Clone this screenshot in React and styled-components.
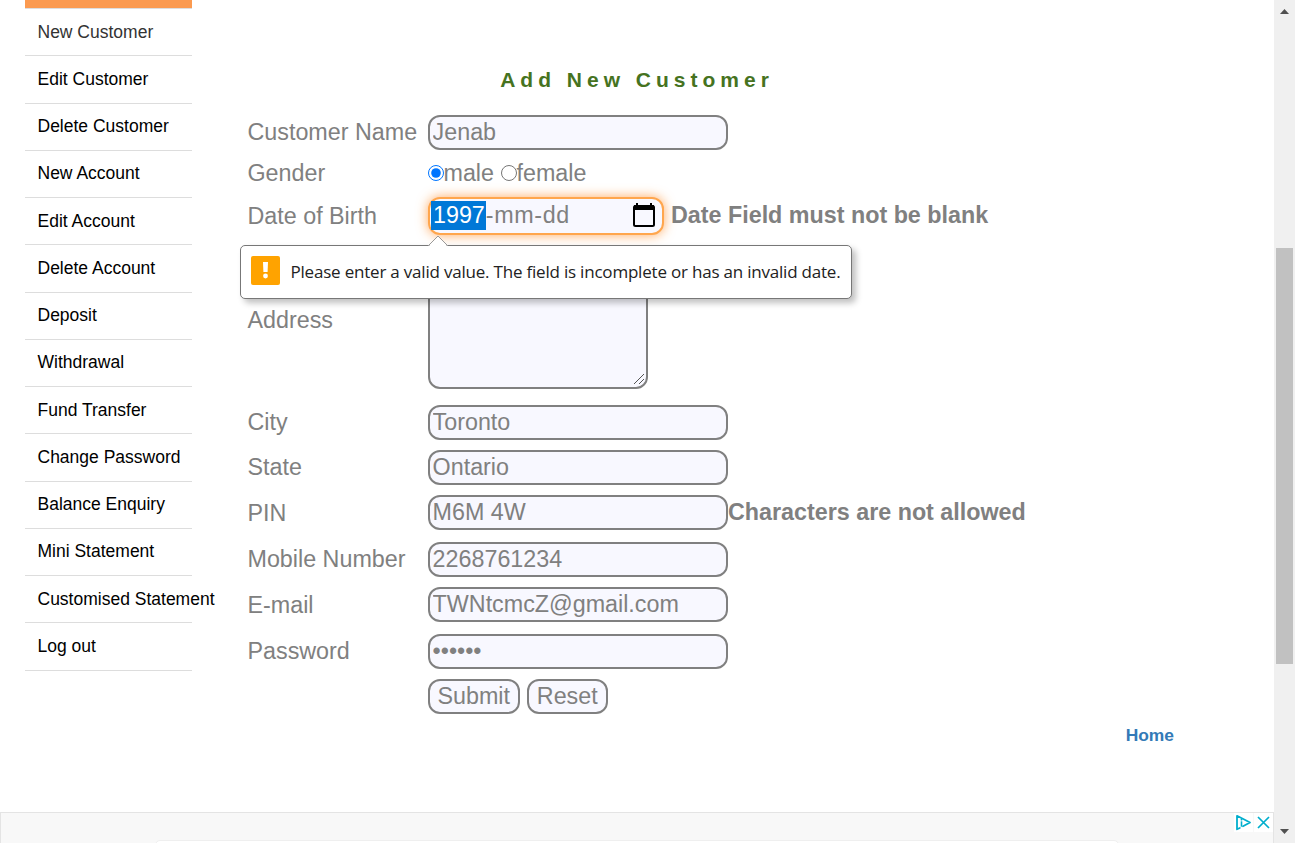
import React from "react";
import styled, { createGlobalStyle, css } from "styled-components";

const GlobalStyle = createGlobalStyle`
  * { box-sizing: border-box; }
  body {
    margin: 0;
    overflow: hidden;
    background: #fff;
    font-family: "Liberation Sans", Arial, sans-serif;
  }
`;

const Window = styled.div`
  display: flex;
  width: 1295px;
  height: 843px;
  overflow: hidden;
`;

const Page = styled.main`
  width: 1274px;
  display: flex;
  flex-direction: column;
`;

const Columns = styled.div`
  display: flex;
  height: 812px;
  padding-left: 25px;
`;

const Menu = styled.ul`
  width: 167px;
  margin: 0;
  padding: 0;
  list-style: none;
  border-top: 8px solid #fb9a50;
`;

const MenuItem = styled.li`
  height: 47.26px;
  padding: 0.55px 0 0 12.5px;
  border-top: 1px solid #ddd;
  line-height: 45.4px;
  font-size: 17.5px;
  white-space: nowrap;
  color: ${(p) => (p.$active ? "#333" : "#000")};
  &:last-child {
    height: 48.4px;
    border-bottom: 1px solid #ddd;
  }
`;

const Content = styled.section`
  flex: 1;
  padding: 64px 100px 0 55.5px;
  display: flex;
  flex-direction: column;
`;

const Title = styled.h1`
  width: 777px;
  height: 46px;
  margin: 0;
  padding-left: 2px;
  text-align: center;
  font-size: 21px;
  line-height: 32px;
  letter-spacing: 5px;
  color: #46731f;
`;

const Row = styled.div`
  display: grid;
  grid-template-columns: 180.5px 1fr;
  align-items: center;
  height: ${(p) => p.$height}px;
  font-size: 23.3px;
  line-height: 27px;
  color: #808080;
`;

const Label = styled.label`
  white-space: nowrap;
  padding-top: ${(p) => (p.$low ? 2 : 0)}px;
`;

const Cell = styled.div`
  display: flex;
  align-items: center;
  position: relative;
`;

const fieldLook = css`
  border: 2px solid #808080;
  border-radius: 12px;
  background: #f8f8ff;
  color: #808080;
  font-family: inherit;
  font-size: 23.3px;
  outline: none;
`;

const TextInput = styled.input`
  ${fieldLook}
  width: 300px;
  height: 35px;
  padding: 0 2px 1px 2.6px;
  ${(p) => p.type === "password" && "padding-bottom: 0;"}
`;

const AddressBox = styled.textarea`
  ${fieldLook}
  width: 220px;
  height: 138px;
  padding: 2px;
  resize: none;
`;

const Grip = styled.svg`
  width: 12px;
  height: 12px;
  margin: 118px 0 0 -15px;
  z-index: 1;
`;

const Radio = styled.input`
  width: 16px;
  height: 16px;
  margin: 0 0 2px;
`;

const RadioText = styled.span`
  margin: 0 7px 0 -0.5px;
`;

const DateInput = styled.div`
  ${fieldLook}
  display: flex;
  align-items: center;
  width: 236px;
  height: 38px;
  padding: 0 6px 2px 1px;
  border-color: #ffa64d;
  box-shadow: 0 0 12px rgba(255, 140, 40, 0.75);
`;

const SelectedYear = styled.span`
  padding: 1px 1px 1px 2px;
  background: #0078d7;
  color: #fff;
`;

const DateRest = styled.span`
  letter-spacing: 0.65px;
`;

const CalendarIcon = styled.svg`
  width: 24px;
  height: 26px;
  margin: 0 0 1px auto;
`;

const Message = styled.strong`
  margin-left: ${(p) => p.$gap || 0}px;
  margin-bottom: ${(p) => (p.$gap ? 2 : 0)}px;
  white-space: nowrap;
`;

const Bubble = styled.div`
  position: absolute;
  z-index: 2;
  top: 48px;
  left: -188px;
  display: flex;
  align-items: center;
  width: 612px;
  height: 54px;
  padding: 0 0 0 10px;
  border: 1px solid #777;
  border-radius: 5px;
  background: #fff;
  box-shadow: 4px 4px 6px rgba(0, 0, 0, 0.25);
  color: #222;
`;

const BubbleArrow = styled.svg`
  position: absolute;
  top: -11px;
  left: 186px;
  width: 22px;
  height: 12px;
`;

const WarnIcon = styled.svg`
  width: 29px;
  height: 29px;
  margin: 0 10.5px 4px 0;
`;

const BubbleText = styled.span`
  font: 400 17px/24px "Open Sans", "Noto Sans", sans-serif;
  letter-spacing: -0.205px;
  white-space: nowrap;
`;

const Button = styled.button`
  ${fieldLook}
  width: ${(p) => p.$width}px;
  height: 35px;
  margin-right: 7px;
  padding: 0 0.5px 1px 0;
`;

const HomeLink = styled.a`
  align-self: flex-end;
  margin-top: 9px;
  font-size: 17.4px;
  line-height: 22px;
  font-weight: bold;
  color: #337ab7;
`;

const AdBar = styled.aside`
  display: flex;
  justify-content: space-between;
  height: 31px;
  padding-left: 154px;
  border: 1px solid #e4e4e4;
  border-bottom: 0;
  background: #f8f8f8;
`;

const AdCard = styled.div`
  width: 964px;
  height: 20px;
  margin-top: 27px;
  border: 1px solid #efefef;
  border-radius: 5px;
  background: #fff;
`;

const AdControls = styled.div`
  display: flex;
  gap: 1px;
  height: 19px;
`;

const AdButton = styled.svg`
  width: 19px;
  height: 19px;
  background: #fff;
`;

const ScrollTrack = styled.div`
  display: flex;
  flex-direction: column;
  align-items: center;
  width: 21px;
  background: #f0f0f0;
`;

const ScrollArrow = styled.svg`
  width: 9px;
  height: 5px;
  margin-top: ${(p) => p.$top}px;
`;

const ScrollThumb = styled.div`
  width: 17px;
  height: 416px;
  margin-top: 234px;
  background: #c1c1c1;
`;

const menuItems = [
  "New Customer", "Edit Customer", "Delete Customer", "New Account",
  "Edit Account", "Delete Account", "Deposit", "Withdrawal", "Fund Transfer",
  "Change Password", "Balance Enquiry", "Mini Statement",
  "Customised Statement", "Log out",
];

function Field({ label, height, low, children }) {
  return (
    <Row $height={height}>
      <Label $low={low}>{label}</Label>
      <Cell>{children}</Cell>
    </Row>
  );
}

function DateField() {
  return (
    <>
      <DateInput>
        <SelectedYear>1997</SelectedYear>
        <DateRest>-mm-dd</DateRest>
        <CalendarIcon viewBox="0 0 24 26">
          <path d="M5 1v4M19 1v4" stroke="#000" strokeWidth="2" />
          <rect x="2" y="4" width="20" height="20" rx="1.5" fill="none" stroke="#000" strokeWidth="2" />
          <path d="M2 3h20v5H2z" fill="#000" />
        </CalendarIcon>
      </DateInput>
      <Message $gap={7}>Date Field must not be blank</Message>
      <Bubble>
        <BubbleArrow viewBox="0 0 22 12">
          <path d="M1 12L11 1.5 21 12z" fill="#fff" />
          <path d="M1 11L11 1 21 11" fill="none" stroke="#999" />
        </BubbleArrow>
        <WarnIcon viewBox="0 0 29 29">
          <rect width="29" height="29" rx="2" fill="#ffa300" />
          <path d="M12 6h5l-.4 10h-4.200z" fill="#fff" />
          <circle cx="14.5" cy="20" r="2.4" fill="#fff" />
        </WarnIcon>
        <BubbleText>
          Please enter a valid value. The field is incomplete or has an invalid date.
        </BubbleText>
      </Bubble>
    </>
  );
}

export default function App() {
  return (
    <Window>
      <GlobalStyle />
      <Page>
        <Columns>
          <Menu>
            {menuItems.map((item, i) => (
              <MenuItem key={item} $active={i === 0}>{item}</MenuItem>
            ))}
          </Menu>
          <Content>
            <Title>Add New Customer</Title>
            <Field label="Customer Name" height={45}>
              <TextInput defaultValue="Jenab" />
            </Field>
            <Field label="Gender" height={37}>
              <Radio type="radio" name="gender" defaultChecked />
              <RadioText>male</RadioText>
              <Radio type="radio" name="gender" />
              <RadioText>female</RadioText>
            </Field>
            <Field label="Date of Birth" height={48}>
              <DateField />
            </Field>
            <Field label="Address" height={160}>
              <AddressBox />
              <Grip viewBox="0 0 12 12">
                <path d="M1 11L11 1M6 11L11 6" stroke="#555" />
              </Grip>
            </Field>
            <Field label="City" height={45}>
              <TextInput defaultValue="Toronto" />
            </Field>
            <Field label="State" height={45}>
              <TextInput defaultValue="Ontario" />
            </Field>
            <Field label="PIN" height={45} low>
              <TextInput defaultValue="M6M 4W" />
              <Message>Characters are not allowed</Message>
            </Field>
            <Field label="Mobile Number" height={49}>
              <TextInput defaultValue="2268761234" />
            </Field>
            <Field label="E-mail" height={41} low>
              <TextInput defaultValue="TWNtcmcZ@gmail.com" />
            </Field>
            <Field label="Password" height={53}>
              <TextInput type="password" defaultValue="secret" />
            </Field>
            <Field height={37}>
              <Button $width={92}>Submit</Button>
              <Button $width={81}>Reset</Button>
            </Field>
            <HomeLink>Home</HomeLink>
          </Content>
        </Columns>
        <AdBar>
          <AdCard />
          <AdControls>
            <AdButton viewBox="0 0 19 19">
              <path d="M5.8 15L3 16.3V2.8L16 9.5 9 13.2" fill="none" stroke="#00aecd" strokeWidth="1.8" strokeLinejoin="round" strokeLinecap="round" />
              <path d="M7.5 8.3v5.400" stroke="#00aecd" strokeWidth="1.6" />
              <circle cx="7.5" cy="6.700" r="0.900" fill="#00aecd" />
            </AdButton>
            <AdButton viewBox="0 0 19 19">
              <path d="M4 4L15 15M15 4L4 15" stroke="#00aecd" strokeWidth="1.700" />
            </AdButton>
          </AdControls>
        </AdBar>
      </Page>
      <ScrollTrack>
        <ScrollArrow $top={9} viewBox="0 0 9 5"><path d="M0 5L4.500 0 9 5z" fill="#505050" /></ScrollArrow>
        <ScrollThumb />
        <ScrollArrow $top={165} viewBox="0 0 9 5"><path d="M0 0L4.500 5 9 0z" fill="#505050" /></ScrollArrow>
      </ScrollTrack>
    </Window>
  );
}
